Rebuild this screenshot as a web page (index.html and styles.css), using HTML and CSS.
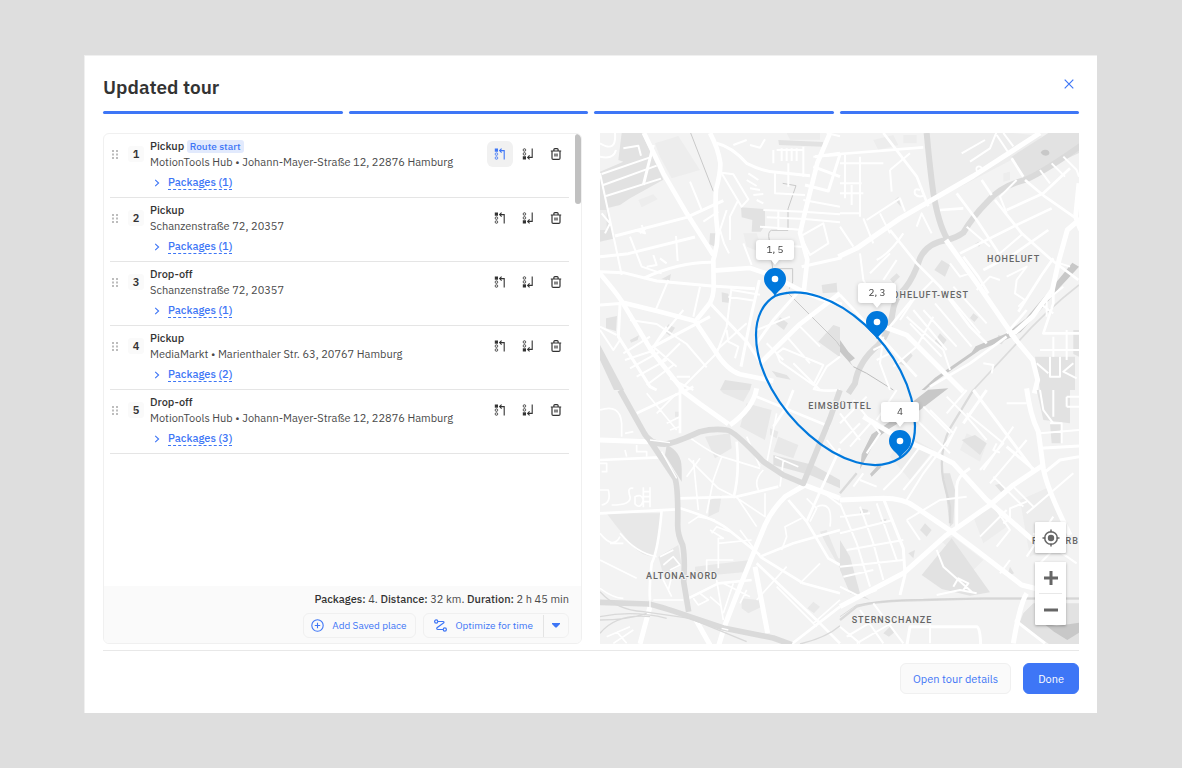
FILE: index.html
```html
<!DOCTYPE html>
<html lang="en">
<head>
<meta charset="utf-8">
<title>Updated tour</title>
<link rel="stylesheet" href="styles.css">
</head>
<body>
<svg class="sprite" aria-hidden="true">
  <symbol id="i-grip" viewBox="0 0 6 9"><g fill="#bdbdbd"><path d="M0 0h2v2H0zM4 0h2v2H4zM0 3.5h2v2H0zM4 3.5h2v2H4zM0 7h2v2H0zM4 7h2v2H4z"/></g></symbol>
  <symbol id="i-first" viewBox="0 0 12 12"><path d="M.8.5h3.2v3.2H.8z" fill="currentColor"/><g fill="none" stroke="currentColor"><rect x="1.3" y="4.9" width="2.3" height="2.4" rx=".8" stroke-width=".9"/><rect x="1.3" y="8.8" width="2.3" height="2.4" rx=".8" stroke-width=".9"/><path d="M5.8 2.6h4.4v9M7.6.6 5.6 2.6l2 2" stroke-width="1.1"/></g></symbol>
  <symbol id="i-last" viewBox="0 0 12 12"><path d="M.8 8.3h3.2v3.2H.8z" fill="currentColor"/><g fill="none" stroke="currentColor"><rect x="1.3" y=".8" width="2.3" height="2.4" rx=".8" stroke-width=".9"/><rect x="1.3" y="4.7" width="2.3" height="2.4" rx=".8" stroke-width=".9"/><path d="M5.8 9.4h4.4v-9M7.6 7.4l-2 2 2 2" stroke-width="1.1"/></g></symbol>
  <symbol id="i-trash" viewBox="0 0 12 12"><path d="M.8 3h10.4M2 3v7.2q0 1.2 1.2 1.2h5.6q1.2 0 1.2-1.2V3M3.9 3V1.6q0-1 1-1h2.2q1 0 1 1V3M5 5.6v3M7 5.6v3" fill="none" stroke="currentColor" stroke-width="1.2"/></symbol>
  <symbol id="i-chev" viewBox="0 0 6 8"><path d="M1.2.8 4.6 4 1.2 7.2" fill="none" stroke="currentColor" stroke-width="1.1"/></symbol>
</svg>
<main class="modal" role="dialog" aria-labelledby="title">
  <header class="head">
    <h1 id="title">Updated tour</h1>
    <button class="close" aria-label="Close"><svg viewBox="0 0 10 10" width="10" height="10"><path d="M.7.7l8.6 8.6M9.3.7.7 9.3" stroke="currentColor" stroke-width="1.2"/></svg></button>
  </header>
  <div class="steps"><i></i><i></i><i></i><i></i></div>
  <div class="content">
    <section class="panel">
      <ol class="stops">
        <li class="stop">
          <svg class="grip"><use href="#i-grip"/></svg><span class="num">1</span>
          <div class="info"><h2>Pickup <span class="tag">Route start</span></h2><p>MotionTools Hub • Johann-Mayer-Straße 12, 22876 Hamburg</p><button class="pk"><svg><use href="#i-chev"/></svg><span>Packages (1)</span></button></div>
          <div class="acts"><button class="act on" aria-label="Move to first"><svg><use href="#i-first"/></svg></button><button class="act" aria-label="Move to last"><svg><use href="#i-last"/></svg></button><button class="act" aria-label="Delete"><svg><use href="#i-trash"/></svg></button></div>
        </li>
        <li class="stop">
          <svg class="grip"><use href="#i-grip"/></svg><span class="num">2</span>
          <div class="info"><h2>Pickup</h2><p>Schanzenstraße 72, 20357</p><button class="pk"><svg><use href="#i-chev"/></svg><span>Packages (1)</span></button></div>
          <div class="acts"><button class="act" aria-label="Move to first"><svg><use href="#i-first"/></svg></button><button class="act" aria-label="Move to last"><svg><use href="#i-last"/></svg></button><button class="act" aria-label="Delete"><svg><use href="#i-trash"/></svg></button></div>
        </li>
        <li class="stop">
          <svg class="grip"><use href="#i-grip"/></svg><span class="num">3</span>
          <div class="info"><h2>Drop-off</h2><p>Schanzenstraße 72, 20357</p><button class="pk"><svg><use href="#i-chev"/></svg><span>Packages (1)</span></button></div>
          <div class="acts"><button class="act" aria-label="Move to first"><svg><use href="#i-first"/></svg></button><button class="act" aria-label="Move to last"><svg><use href="#i-last"/></svg></button><button class="act" aria-label="Delete"><svg><use href="#i-trash"/></svg></button></div>
        </li>
        <li class="stop">
          <svg class="grip"><use href="#i-grip"/></svg><span class="num">4</span>
          <div class="info"><h2>Pickup</h2><p>MediaMarkt • Marienthaler Str. 63, 20767 Hamburg</p><button class="pk"><svg><use href="#i-chev"/></svg><span>Packages (2)</span></button></div>
          <div class="acts"><button class="act" aria-label="Move to first"><svg><use href="#i-first"/></svg></button><button class="act" aria-label="Move to last"><svg><use href="#i-last"/></svg></button><button class="act" aria-label="Delete"><svg><use href="#i-trash"/></svg></button></div>
        </li>
        <li class="stop">
          <svg class="grip"><use href="#i-grip"/></svg><span class="num">5</span>
          <div class="info"><h2>Drop-off</h2><p>MotionTools Hub • Johann-Mayer-Straße 12, 22876 Hamburg</p><button class="pk"><svg><use href="#i-chev"/></svg><span>Packages (3)</span></button></div>
          <div class="acts"><button class="act" aria-label="Move to first"><svg><use href="#i-first"/></svg></button><button class="act" aria-label="Move to last"><svg><use href="#i-last"/></svg></button><button class="act" aria-label="Delete"><svg><use href="#i-trash"/></svg></button></div>
        </li>
      </ol>
      <div class="thumb"></div>
      <div class="summary">
        <p><b>Packages:</b> 4. <b>Distance:</b> 32 km. <b>Duration:</b> 2 h 45 min</p>
        <div class="tools">
          <button class="tool add"><svg viewBox="0 0 13 13" width="13" height="13" fill="none" stroke="currentColor" stroke-width="1.1"><circle cx="6.5" cy="6.5" r="5.7"/><path d="M6.5 3.8v5.4M3.8 6.5h5.4"/></svg>Add Saved place</button>
          <div class="split">
            <button class="tool opt"><svg viewBox="0 0 13 13" width="13" height="13" fill="none" stroke="currentColor" stroke-width="1.2"><circle cx="2.2" cy="2.5" r="1.6"/><circle cx="10.8" cy="10.5" r="1.6"/><path d="M3.9 2.5h5.2q1 .1.8 1.2L3 8.7q-.8 1.6 1 1.8h5.1"/></svg>Optimize for time</button>
            <button class="tool more" aria-label="More options"><svg viewBox="0 0 8 5" width="8" height="5"><path d="M0 0h8v1L4.6 4.6H3.4L0 1z" fill="currentColor"/></svg></button>
          </div>
        </div>
      </div>
    </section>
    <section class="map" aria-label="Map">
      <svg class="canvas" viewBox="0 0 479 511" preserveAspectRatio="xMidYMid slice">
        <rect width="479" height="511" fill="#f3f3f3"/>
        <g transform="scale(.33333)" fill="none" stroke-linejoin="round">
          <g transform="translate(0 -9)">
            <path fill="#e2e2e2" d="M65 9h60l65 140-100 56-30 20-40 10-20-110 70-30-15-5zM0 135l20 100 25 90-45 10zM423 232l72 5v50l-13 18h-27l2-35-32-8zM535 30l135 6-2 14-131-5zM665 465l45-7 2 29-44 3zM655 635l45-50 20 7v90zM18 565l33-7-3 45-30-8zM205 583l20 10-15 24-18-12zM540 562l24 18-12 20-24-18zM365 487l20 4 5 28-24-3zM330 310l18 0-4 40-16-8zM185 447l28-15-4 20zM375 750l80 12-5 18h-90zM515 722l45 13 12 14-42-8zM90 630l27-14-4 14-20 8z"/>
            <path fill="#ededed" d="M165 40l70-22 65 102-85 25-35-65zM115 210l45-17 13 15-48 24zM430 310h40l20 60-50-20zM0 240h20v60H0zM560 9h100v20H570z"/>
            <path fill="#dcdcdc" d="M0 645l72 135H42L0 690z"/>
            <path stroke="#c9c9c9" stroke-width="3" d="M272 9l68 175M548 160l40 7-24 70v64h-50q-12 4-6 30l10 85h60v40l-10 20M560 485l150 150 10 15"/>
            <path stroke="#fff" stroke-width="14" d="M132 9l58 121 70 120 80 125M330 9q24 45 31 90 1 30-13 80-4 60 5 130 0 40-13 80l1 80q0 30-11 50l-40 50M-5 425q65 75 80 105l78 130 95 120M70 518l110 27 105 28 60 90q35 57 75 70l100 20M340 422l110-8 60 20 90 46 60 25 65 20M480 700L600 582 720 490M690 9l-38 90-40 160-12 50 22 80-10 90"/>
            <path stroke="#fff" stroke-width="9" d="M350 40q45 10 90 60 50 25 90 27l100 10M605 410l120-27M45 318l215-56 110-50M0 380l85-9 200-50M0 425l70 3 100 25 165 15 130 8M60 525L55 620l95 150 20 10M330 520l110 115 40 60M285 572l50-55M150 655l180-95M720 70l-75 10M0 525l70-5M130 445q110-50 210-48M478 450l-25 110-30 150M640 110l80 30M615 165l70 18 35-110M160 45l-30 120M600 480l-80 90-50 70"/>
            <path stroke="#fff" stroke-width="6" d="M5 132l145-50M10 165l160-58M18 198l165-52M0 130l45 210 20 95M70 55l45-8 8 30M365 128l35 5 45 75-20 22-60-100M90 320l35 90 60 20M228 318l5 75M205 450l-40 95M300 470l-20 90M395 470l-15 120-30 80M385 500l80 12M395 480l85 14M90 570l80 12 90 60 60 70M250 540l-90 110M200 590l-40 60 70 60M70 670l80-50M75 690l90-30M90 715l90-50M110 740l90-50M140 765l80-60M240 640l-60 60M250 770l100-100M350 660l90-80M0 590l50 25M0 600l40 60 20-30M520 60v40M530 60h80M545 55v38M560 55v38M575 55v38M590 55v38M610 50v90M525 130v60l90 5M565 100v70M490 240l120 5 110 8M500 262l115 5 105 10M480 290l130 10M480 345l130 5M535 240v60M610 210l110 20M640 80l80-5M680 9l40 10M600 320l70-40 15 60-55 35-20-40M380 240l-20 60 12 40 15 30M415 210l-25 50 0 70M430 340l25 65M270 155l35 85M310 275l45-30M0 40q50 30 45-31M0 80q40 10 48-20M105 300l30 10-10-25M120 310l20-18M5 250l25 30-15 30M440 30l-40 15M450 45l30 8 15-25M445 130l30 20M440 150l30 18M450 175l30 5M460 195l30-3M470 210l20 10M530 670l20-15 120 50-30 60-100-70zM500 640l50 50M580 700l80 80M600 590l60 60M560 620l70 80M470 600l100-40M380 600l5 35 30 15-10 35M210 745l70 35M230 740h40M160 375l10 30-30 5M180 385l20 15M640 780l40-70 40-30"/>
          </g>
          <g transform="translate(720 -9)">
            <path fill="#ededed" d="M268 9h250l90 9-90 70-210 110-28 10zM100 30l60-15 15 30-60 15zM190 15h40v25h-40zM490 130l20-5v25l-20 5z"/>
            <path fill="#e2e2e2" d="M515 80l110-71h92v60l-160 75-10-3zM305 390l25 15-15 35-32-20zM300 610l20 20-15 20-22-15zM210 665l8 12-25 30-18-7zM400 550l15 12-12 14-13-12zM170 430l10 10-20 20-10-12zM475 615l25 8-15 20-18-5zM700 600h17v80l-17-8zM585 680h120v100H600zM415 335l10 5-8 10-12-8zM175 200l8 30-18-20z"/>
            <path fill="#c8c8c8" d="M0 630l25 35 20 20-15 10 10 15L0 665zM602 68q5-12 20-8 10 6 4 14-14 8-24-6z"/>
            <path stroke="#dadada" stroke-width="18" stroke-linecap="butt" d="M260 9q10 110 20 180 15 90 40 135M725 45Q620 120 560 148q-80 20-120 70-40 40-70 90-20 15-50 22-60 10-80 55-20 60-45 90-30 30-35 60-8 70-45 110-60 50-70 115l-20 30"/>
            <path fill="#c8c8c8" d="M717 410l-60 65-55 65-60 66-38 20-84 34-60 42-80 56-25 22h-10l40-37 110-76 12-18 90-38 60-45 80-95 60-73z"/>
            <path stroke="#dcdcdc" stroke-width="5" d="M717 465Q620 540 530 640l-130 140"/>
            <path stroke="#bdbdbd" stroke-width="3" d="M40 710l40 20 80 50"/>
            <path stroke="#fff" stroke-width="15" d="M600 9L400 138 180 265 50 355-5 380M318 330l100 140 110 160 50 60 15 60-10 40M130 590l70 25 170 170M717 270l-35 30-25 90-20 90-60 80-50 45-20 10M717 160l-10 100 15 40"/>
            <path stroke="#fff" stroke-width="8" d="M0 72l250-20M130 9l100 130 35 90M0 495l70 75 60 60 100 110M515 85l35 55M425 150l30 45M300 240l70-5M350 190l60 80 60 90 10 20M465 210l80 100 90 80 80 60M555 150l60 50 100 70M500 240l110-50 80-75M360 370l180-90 95-45M370 380l45 60 30 50M430 420l95-50 100-70M640 385l-35 50-70 110M500 610l60-70M640 470v50l-30 90h107M270 770l120-70 110-80M215 510L150 590M150 300l80 100 70 70 90 120 50 50"/>
            <path stroke="#fff" stroke-width="6" d="M0 100h130M15 75v130M60 80v180M0 160h65M35 165v60M0 250h60M0 190h70M150 120l60-50M150 120l5 65M80 270l100-65 15 40M70 265l30 75M120 250l30 60M0 290l40 60M60 370l10 80 30 50M110 390q40-20 80-80M90 430l60-60M130 450l40-60M240 180q-20-8-15 12 10 12 25 5M230 290l15-40 30 60M365 70l70-40M390 95l60-40 20-50M470 15l40 60M490 9l30 40M600 120l30 40M635 100l40 40M670 80l40 40 7 20M530 150l-50 50 20 50M380 290l70 60M340 360l60 90 50 60M480 370l70-60M330 400l30 40 30-10M410 480l40-40 30 10M500 440l60-30-30 40-5 40 30 20-20 20M250 540l100 110M220 540l100 120M285 520l110 130M210 580l95 100M320 490l100 120M340 470l100 110M200 560l110 100 20 60M180 570l40-60 60-60M280 560l-50 90-70 60M430 700l30 5-5 25M100 660l40-20M110 690l40-20M130 620l-10 80 30 80M620 560v-50l50-40M640 620v60M680 600v90M600 660h117M630 680v60h30v-60M590 700l35 30M700 700l-30 25 40 20M600 520l40 30M660 400l30 10"/>
            <circle cx="417" cy="117" r="8" stroke="#fff" stroke-width="5"/>
          </g>
          <g transform="translate(0 771)">
            <path fill="#e8e8e8" d="M20 370h165l-20 130q-40 0-70-35-50-60-75-95zM360 0h90l-20 35-60-25zM440 40l75 20-20 90-75-40zM315 140l75-10 5 45-50 30zM535 140l60 25-15 40-60-20zM510 115l25 10-5 20-20-10zM285 530l165-20-5 35-160 15zM175 500l60-35 10 60-55 30zM330 330l35-15-8 50-32 15zM225 65h15v15h-15zM660 425l20-5 35 85 5 0v30l-40-70zM640 635l20 15-18 20-20-15zM425 625l50 5 10 20-40 20-20-15z"/>
            <path fill="#e0e0e0" d="M520 195l60 15 60 15 80 45v25l-90-40-110-30z"/>
            <path stroke="#fff" stroke-width="15" d="M470-5q-10 60-80 110M240-3l60 45 85 60M0 150l145 5M615 285l-60 35q-40 40-60 85l-45 110-40 100-35 90-20 65M600 280l120 45M465 530l38 200M285 685l45 80M150 650l-30 112"/>
            <path stroke="#fff" stroke-width="8" d="M0 210l180-8M0 370l230-12M240 325l170-5 125-30M240 355q100 30 140 60l100 80M480 500l100-40 140-40M480 500l130 80 110 30M470 520l190 180 60 60M565 330l55 65 65 110 35 20M410 155q10 100-10 170M185 360q-10 120-30 160-8 60-5 110M720 175l-60 130-40 90M640-5q20 10 80 5M720 650L575 762M265 625l90-45 100-10M110 70l170-80M240-5v135M470 20l220 90M520 110l40-60 20-50"/>
            <path stroke="#fff" stroke-width="5" d="M0 60q60-20 65 40v40M75 130l25-5M75 180l5 20M110 165v20h30v15M0 220h20v25H5M0 300h25q10 40-20 45M35 345q60 0 55-25-10-30 10-25M130 292v60M150 292v60M130 305h20M130 320h20M130 335h20M105 320q20-10 25 10-8 30-25 12zM140 10l90 110M170 70l60-60M200 100l40-20M210 120l30-10M265 140q70 50 100 60l115 35M280 210l15 150M300 205l-40 55M320 370l20-100 25-70M265 205l90 90 50 25M410 320l60 90M405 320l90 60v-70M490 240q-30 30-15 60M265 400l30-20 50 10M330 420l40 25-15 0v90M335 430l15-20 40 15M320 560v-50h80M355 460l100-10M420 420l60 80M480 230l-40-90M545 480l15-40-5-30 50-25M500 220l30-150M525 200l70 30M540 290l10-80M620 325l30 30-20 40M650 350q50-20 40 60M660 300l60 45M680 150l40 50M560 530l-90 100M600 580l60-60M530 590l120 120M640 700l80-70M350 570l20 120M300 610l25 20-30 15-15-20M330 620l35 30M160 630h90M180 550l35 70M215 560l-10 40M180 500l40-20M190 525l30-25 20 25-30 15M0 430q40 50 60 10M30 460l40 0M0 510l110 55M60 430q50 60 110 70M20 740l70-30M40 760l60-40M50 725l30 35M0 595q40 30 70 30M0 640h60M400 580l-30 90M370 580l80 40M440 600l-20 40"/>
            <path stroke="#dadada" stroke-width="17" d="M60 0l70 125q20 40 70 37 30-5 100-37 40-10 80-5 20 0 110 95l60 40 60 25L690 85l30-85M145 145l80 120q10 30 8 140 0 30 15 60 8 40 3 110l15 90M0 637l145 5q30 5 115 35l110 37 150 30 55 20"/>
            <path fill="#dadada" d="M200 165q45 20 45 70v40l-50-80z"/>
            <path stroke="#fff" stroke-width="4" d="M150 150l60 8M185 185l45 80M150 655v-25M365 715l20 5"/>
            <path stroke="#d9d9d9" stroke-width="4" d="M0 605q50 55 130 60l140 20 170 70M0 680q100-20 200 5M0 690q80 0 140-20M0 730q50-60 150-50M600 762q80-20 120-55"/>
          </g>
          <g transform="translate(720 771)">
            <path fill="#ededed" d="M380 130l60 30-20 55-60-35zM400 380l60-30 40 60-70 50zM540 330l90-40 60 150-120 60zM190 130l90 50-70 90-60-70zM300 450l40-10 90 70-30 30z"/>
            <path fill="#e2e2e2" d="M245 555l90-110 115 162-60 10-85-20zM0 450l30 50 30 110 30 20-60-20-30-70zM365 150l40-15 35 25-20 35zM590 0h100v100l-80-10zM630 100h33v60h-28zM550 670l30-30h137v122h-90l-90-60zM310 250h20l15 50-5 100-10 10zM465 285l20-5 15 20-15 8zM60 355l25 5-5 15-20 0zM240 420l15-20 20 20-15 20zM500 560l10-30 12 20zM205 490l20-10-5 25zM120 390l20-4-5 15zM130 730l20-20 15 15-18 15z"/>
            <path fill="#c8c8c8" d="M325-5L240 60l-90 55-40 30-35 65-15 28 5-45 30-60 75-52 15-20 80-62zM90 252l25-28 10 6-30 30zM610 700l40 8 67-10v30l-35 22-40-25z"/>
            <path stroke="#dadada" stroke-width="7" d="M0 310l50-60M400 0L330 115q-35 70-20 155l20 80v50M0 690l50-40q60-20 200-20l180-5h287"/>
            <path stroke="#d0d0d0" stroke-width="2" d="M0 680l50-35q100-20 390-18h277"/>
            <path stroke="#fff" stroke-width="15" d="M0 330l130-5q60 0 95 25l110 75 80 60 130 100 60 15M560-5q10 80 35 130l15 110q10 60 80 200M0 650l190-100 130-115 130-90 70-60 90-60M560 610q-20 30-40 150M70 80l100 60 110 50 60 30 100 110 150 130"/>
            <path stroke="#fff" stroke-width="9" d="M130 325l60 150 5 80-15 60M350 420V290q0-30 40-55M500 170l90 75M600 175l117-7M200 770l10-60h200q10 0 12 52M525 690l90 70M400 0l180 240M440 0l-70 100M610 250l50-40 57-10"/>
            <path stroke="#fff" stroke-width="6" d="M0 70l60 80M40 30l80 100-40 60M0 160l60-60M30 170l70-80M0 100l80-80M170 0l-60 90M220 80l60 60 50 50M270 60l70 70-90 120-50 80M240 170l-60 80-50 50M280 190l-90 110M250 50l80 80M320 20l60 60 60 70M350 110l-30 60M380 70l110 90-70 80M520 110l-90 130M560 150l-110 130M460 260l90 90M400 290l80 80M520 290l60 60M450 330l60 90-40 50M500 360l-80 80M490 400l20-15v-30l50-20M200 390l100-60 80-10M200 390l40 60M560 370l140-120M580 430l130 90M560 500l80-120M600 520l60-60M0 530l190-20M10 560l90-20M0 340l50 120 40 130M60 350l40 110 30 110M110 340l60 170M0 430l160-40M20 480l170-30M0 590l60 30 50-20M0 380l90-10M100 640l90 120M60 660l70 100M20 740l100-60M0 710l60 50M50 760l120-70M270 700v60M290 615l70-15 50 10M340 590l15-25 30 15-15 20M290 480l20 50 90 80M480 550l30-40M600 0l10 60 30 40M640 0v80M680 20h37M680 50h37M680 20v30M500 40h60M380 0l-60 70M60 270l50 20M70 250l-30 40M470 160l-10 20 20 8M630 100l35 0v60M600 130l117-10"/>
          </g>
        </g>
        <g class="place">
          <text x="387" y="129">HOHELUFT</text>
          <text x="327" y="165" text-anchor="middle">HOHELUFT-WEST</text>
          <text x="240" y="276" text-anchor="middle">EIMSBÜTTEL</text>
          <text x="82" y="446" text-anchor="middle">ALTONA-NORD</text>
          <text x="292" y="490" text-anchor="middle">STERNSCHANZE</text>
          <text x="432" y="411">ROTHERB</text>
        </g>
        <path d="M175 163C228 142 315 217 315 293C315 313 308 320 300 325C250 357 156 273 156 202C156 184 163 170 175 163Z" fill="none" stroke="#0078dc" stroke-width="2.2"/>
        <defs><g id="pin"><path d="M0 0C-4-7-11-9-11-17A11 11 0 0 1 11-17C11-9 4-7 0 0Z" fill="#0078dc"/><circle cy="-17" r="3.3" fill="#fff"/></g>
        <path id="tip" d="M-16 0h32q3 0 3 3v14q0 3-3 3H4L0 25-4 20h-12q-3 0-3-3V3q0-3 3-3z" fill="#fff"/></defs>
        <use href="#pin" x="175" y="163"/><use href="#pin" x="277" y="206"/><use href="#pin" x="300" y="325"/>
        <g class="tips"><use href="#tip" x="175" y="107"/><use href="#tip" x="277" y="150"/><use href="#tip" x="300" y="269"/></g>
        <g class="tiptext"><text x="175" y="120">1, 5</text><text x="277" y="163">2, 3</text><text x="300" y="282">4</text></g>
      </svg>
      <div class="controls">
        <button class="ctl" aria-label="Show my location"><svg viewBox="0 0 18 18" width="18" height="18"><circle cx="9" cy="9" r="6.3" fill="none" stroke="currentColor" stroke-width="1.5"/><circle cx="9" cy="9" r="3.2" fill="currentColor"/><path d="M9 .5v3M9 14.5v3M.5 9h3M14.5 9h3" stroke="currentColor" stroke-width="1.5"/></svg></button>
        <div class="zoom">
          <button class="ctl" aria-label="Zoom in"><svg viewBox="0 0 14 14" width="14" height="14"><path d="M7 0v14M0 7h14" stroke="currentColor" stroke-width="3"/></svg></button>
          <button class="ctl" aria-label="Zoom out"><svg viewBox="0 0 14 14" width="14" height="14"><path d="M0 7h14" stroke="currentColor" stroke-width="3"/></svg></button>
        </div>
      </div>
    </section>
  </div>
  <footer class="foot"><button class="btn">Open tour details</button><button class="btn primary">Done</button></footer>
</main>
</body>
</html>
```
FILE: styles.css
```css
* { box-sizing: border-box; }
body {
  margin: 0;
  min-height: 100vh;
  display: flex;
  padding: 55px 85px 55px 84px;
  background: #dedede;
  color: #333;
  font: 11px/16px "IBM Plex Sans", Roboto, sans-serif;
}
button { font: inherit; color: inherit; border: 0; padding: 0; background: none; cursor: pointer; }
h1, h2, p, ol { margin: 0; padding: 0; }
.sprite { position: absolute; width: 0; height: 0; }
.modal { flex: 1; display: flex; flex-direction: column; background: #fff; border: 1px solid #f0f0f0; border-width: 1px 0 0 1px; padding: 18px 18px 19px 18px; }
.head { display: flex; justify-content: space-between; align-items: flex-start; height: 37px; }
h1 { font-size: 19px; line-height: 26px; font-weight: 600; }
.close { display: flex; width: 20px; height: 20px; align-items: center; justify-content: center; color: #3e76f6; }
.steps { display: grid; grid-template-columns: repeat(4, 1fr); gap: 6px; }
.steps i { height: 3px; border-radius: 2px; background: #3e76f6; }
.content { flex: 1; display: grid; grid-template-columns: 1fr 1fr; gap: 18px; margin-top: 19px; }
.panel { position: relative; display: flex; flex-direction: column; justify-content: space-between; border: 1px solid #f0f0f0; border-radius: 6px; overflow: hidden; }
.stops { list-style: none; padding: 0 12px 0 6px; }
.stop { display: flex; height: 64px; padding: 4px 0 0 2px; border-bottom: 1px solid #e5e5e5; }
.grip { width: 6px; height: 9px; margin: 12px 12px 0 0; }
.num { width: 16px; height: 16px; margin: 8px 6px 0 -2px; border-radius: 3px; background: #fafafa; text-align: center; font-weight: 600; }
.info { flex: 1; }
h2 { font-size: 11px; line-height: 16px; font-weight: 500; }
.info p { color: #4a4a4a; }
.tag { display: inline-block; font-size: 10px; line-height: 13px; padding: 0 3px; border-radius: 3px; background: #e2eafd; color: #3e76f6; }
.pk { display: flex; align-items: center; gap: 8px; margin: 5px 0 0 4px; color: #3e76f6; font-weight: 500; }
.pk svg { width: 6px; height: 8px; }
.pk span { line-height: 14px; border-bottom: 1px dashed #3e76f6; }
.acts { display: flex; gap: 2px; margin-top: 3px; }
.act { display: flex; align-items: center; justify-content: center; width: 26px; height: 26px; border-radius: 6px; }
.act svg { width: 12px; height: 12px; }
.act.on { background: #f1f1f1; color: #3e76f6; }
.thumb { position: absolute; top: 0; right: 0; width: 6px; height: 70px; border-radius: 3px; background: #c1c1c1; }
.summary { padding: 5px 12px; background: #fafafa; text-align: right; }
.summary p { color: #4a4a4a; }
.summary b { color: #333; font-weight: 500; }
.tools { display: flex; justify-content: flex-end; gap: 7px; margin-top: 6px; }
.tool { display: flex; align-items: center; height: 25px; color: #3e76f6; font-size: 10px; }
.add, .split { border: 1px solid #f0f0f0; border-radius: 6px; }
.add { gap: 8px; padding: 0 9px 0 7px; }
.split { display: flex; height: 25px; align-items: center; }
.opt { gap: 8px; padding: 0 10px; }
.more { width: 25px; height: 22px; justify-content: center; border-left: 1px solid #e4e4e4; }
.map { position: relative; overflow: hidden; }
.canvas { position: absolute; width: 100%; height: 100%; }
.place { font: 500 9px Roboto, sans-serif; letter-spacing: 1px; fill: #666; stroke: #f3f3f3; stroke-width: 2px; paint-order: stroke; }
.tips { filter: drop-shadow(0 1px 2px rgba(0, 0, 0, .2)); }
.tiptext { font-size: 10px; fill: #444; text-anchor: middle; }
.controls { position: absolute; right: 13px; bottom: 19px; display: grid; gap: 9px; }
.ctl { display: flex; width: 31px; height: 31px; align-items: center; justify-content: center; background: #fff; color: #666; }
.controls > .ctl, .zoom { box-shadow: 0 1px 3px rgba(0, 0, 0, .3); border-radius: 1px; background: #fff; }
.zoom .ctl + .ctl { border-top: 1px solid #e8e8e8; width: 23px; margin: 0 4px; height: 32px; }
.foot { display: flex; justify-content: flex-end; gap: 12px; margin-top: 6px; padding-top: 12px; border-top: 1px solid #e8e8e8; }
.btn { height: 31px; padding: 0 12px; border: 1px solid #f0f0f0; border-radius: 6px; background: #fafafa; color: #3e76f6; }
.primary { padding: 0 14px; border-color: #3e76f6; background: #3e76f6; color: #fff; }
```
